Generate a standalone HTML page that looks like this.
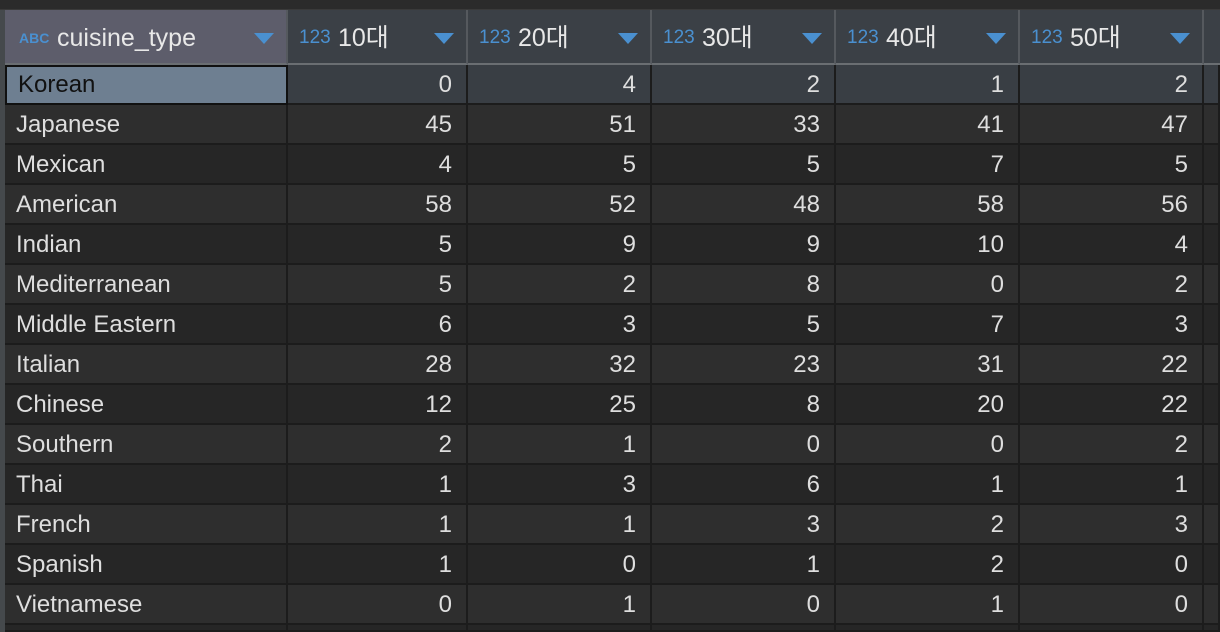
<!DOCTYPE html>
<html style="margin:0;width:1220px;height:632px;overflow:hidden"><head><meta charset="utf-8"><style>
body{margin:0;width:1220px;height:632px;background:#262626;overflow:hidden;font-family:"Liberation Sans","Noto Sans CJK KR",sans-serif;position:relative}
.top{position:absolute;left:0;top:0;width:1220px;height:10px;background:#2b2b2b;border-bottom:1px solid #3a3a3a;box-sizing:border-box}
.lstrip{position:absolute;left:0;top:10px;width:5px;height:622px;background:#45494c}
.c{position:absolute;box-sizing:border-box;border-right:2px solid #1c1c1c;border-bottom:2px solid #1c1c1c;color:#dedede;font-size:24px;line-height:40px;overflow:hidden}
.h{position:absolute;top:10px;height:55px;box-sizing:border-box;background:#3b4046;border-right:2px solid #55595e;border-bottom:2px solid #6a6e72;color:#e8e8e8;font-size:25px;line-height:54px}
.h .t{position:absolute;top:1px}
.h .ic{position:absolute;top:1px;color:#4a90d0;font-size:19px}
.h .arr{position:absolute;top:23px;width:0;height:0;border-left:10px solid transparent;border-right:10px solid transparent;border-top:11px solid #4a90d0}
.n{text-align:right;padding-right:14px}
.s{padding-left:11px}
</style></head><body>
<div class="top"></div><div class="lstrip"></div>
<div id="g"></div>
<script>
var cols=[[5,283],[288,180],[468,184],[652,184],[836,184],[1020,184],[1204,16]];
var heads=["cuisine_type","10대","20대","30대","40대","50대"];
var rows=[["Korean",0,4,2,1,2],["Japanese",45,51,33,41,47],["Mexican",4,5,5,7,5],["American",58,52,48,58,56],["Indian",5,9,9,10,4],["Mediterranean",5,2,8,0,2],["Middle Eastern",6,3,5,7,3],["Italian",28,32,23,31,22],["Chinese",12,25,8,20,22],["Southern",2,1,0,0,2],["Thai",1,3,6,1,1],["French",1,1,3,2,3],["Spanish",1,0,1,2,0],["Vietnamese",0,1,0,1,0],["","","","","",""]];
var h="";
for(var i=0;i<7;i++){var x=cols[i][0],w=cols[i][1];
 if(i==6){h+='<div class="h" style="left:'+x+'px;width:'+w+'px;border-right:none"></div>';continue;}
 var bg=i==0?'background:#5d5d6b;':'';
 var ic=i==0?'<span class="ic" style="left:14px;font-size:14px;font-weight:bold;top:1px">ABC</span>':'<span class="ic" style="left:11px">123</span>';
 h+='<div class="h" style="left:'+x+'px;width:'+w+'px;'+bg+'">'+ic+'<span class="t" style="left:'+(i==0?52:50)+'px">'+heads[i]+'</span><span class="arr" style="left:'+(w-34)+'px"></span></div>';}
for(var r=0;r<rows.length;r++){var y=65+r*40;var ht=r==14?7:40;
 for(var i=0;i<7;i++){var x=cols[i][0],w=cols[i][1];
  var bg=r%2==1?'#2e2e2e':'#262626';
  var extra='';
  if(r==0){bg='#393e44'; if(i==0){bg='#6e7f91';extra='border:2px solid #111;color:#111;line-height:36px;';}}
  var v=i<6?rows[r][i]:'';
  h+='<div class="c '+(i==0?'s':'n')+'" style="left:'+x+'px;top:'+y+'px;width:'+w+'px;height:'+ht+'px;background:'+bg+';'+extra+'">'+v+'</div>';}}
document.getElementById('g').innerHTML=h;
</script>
</body></html>
